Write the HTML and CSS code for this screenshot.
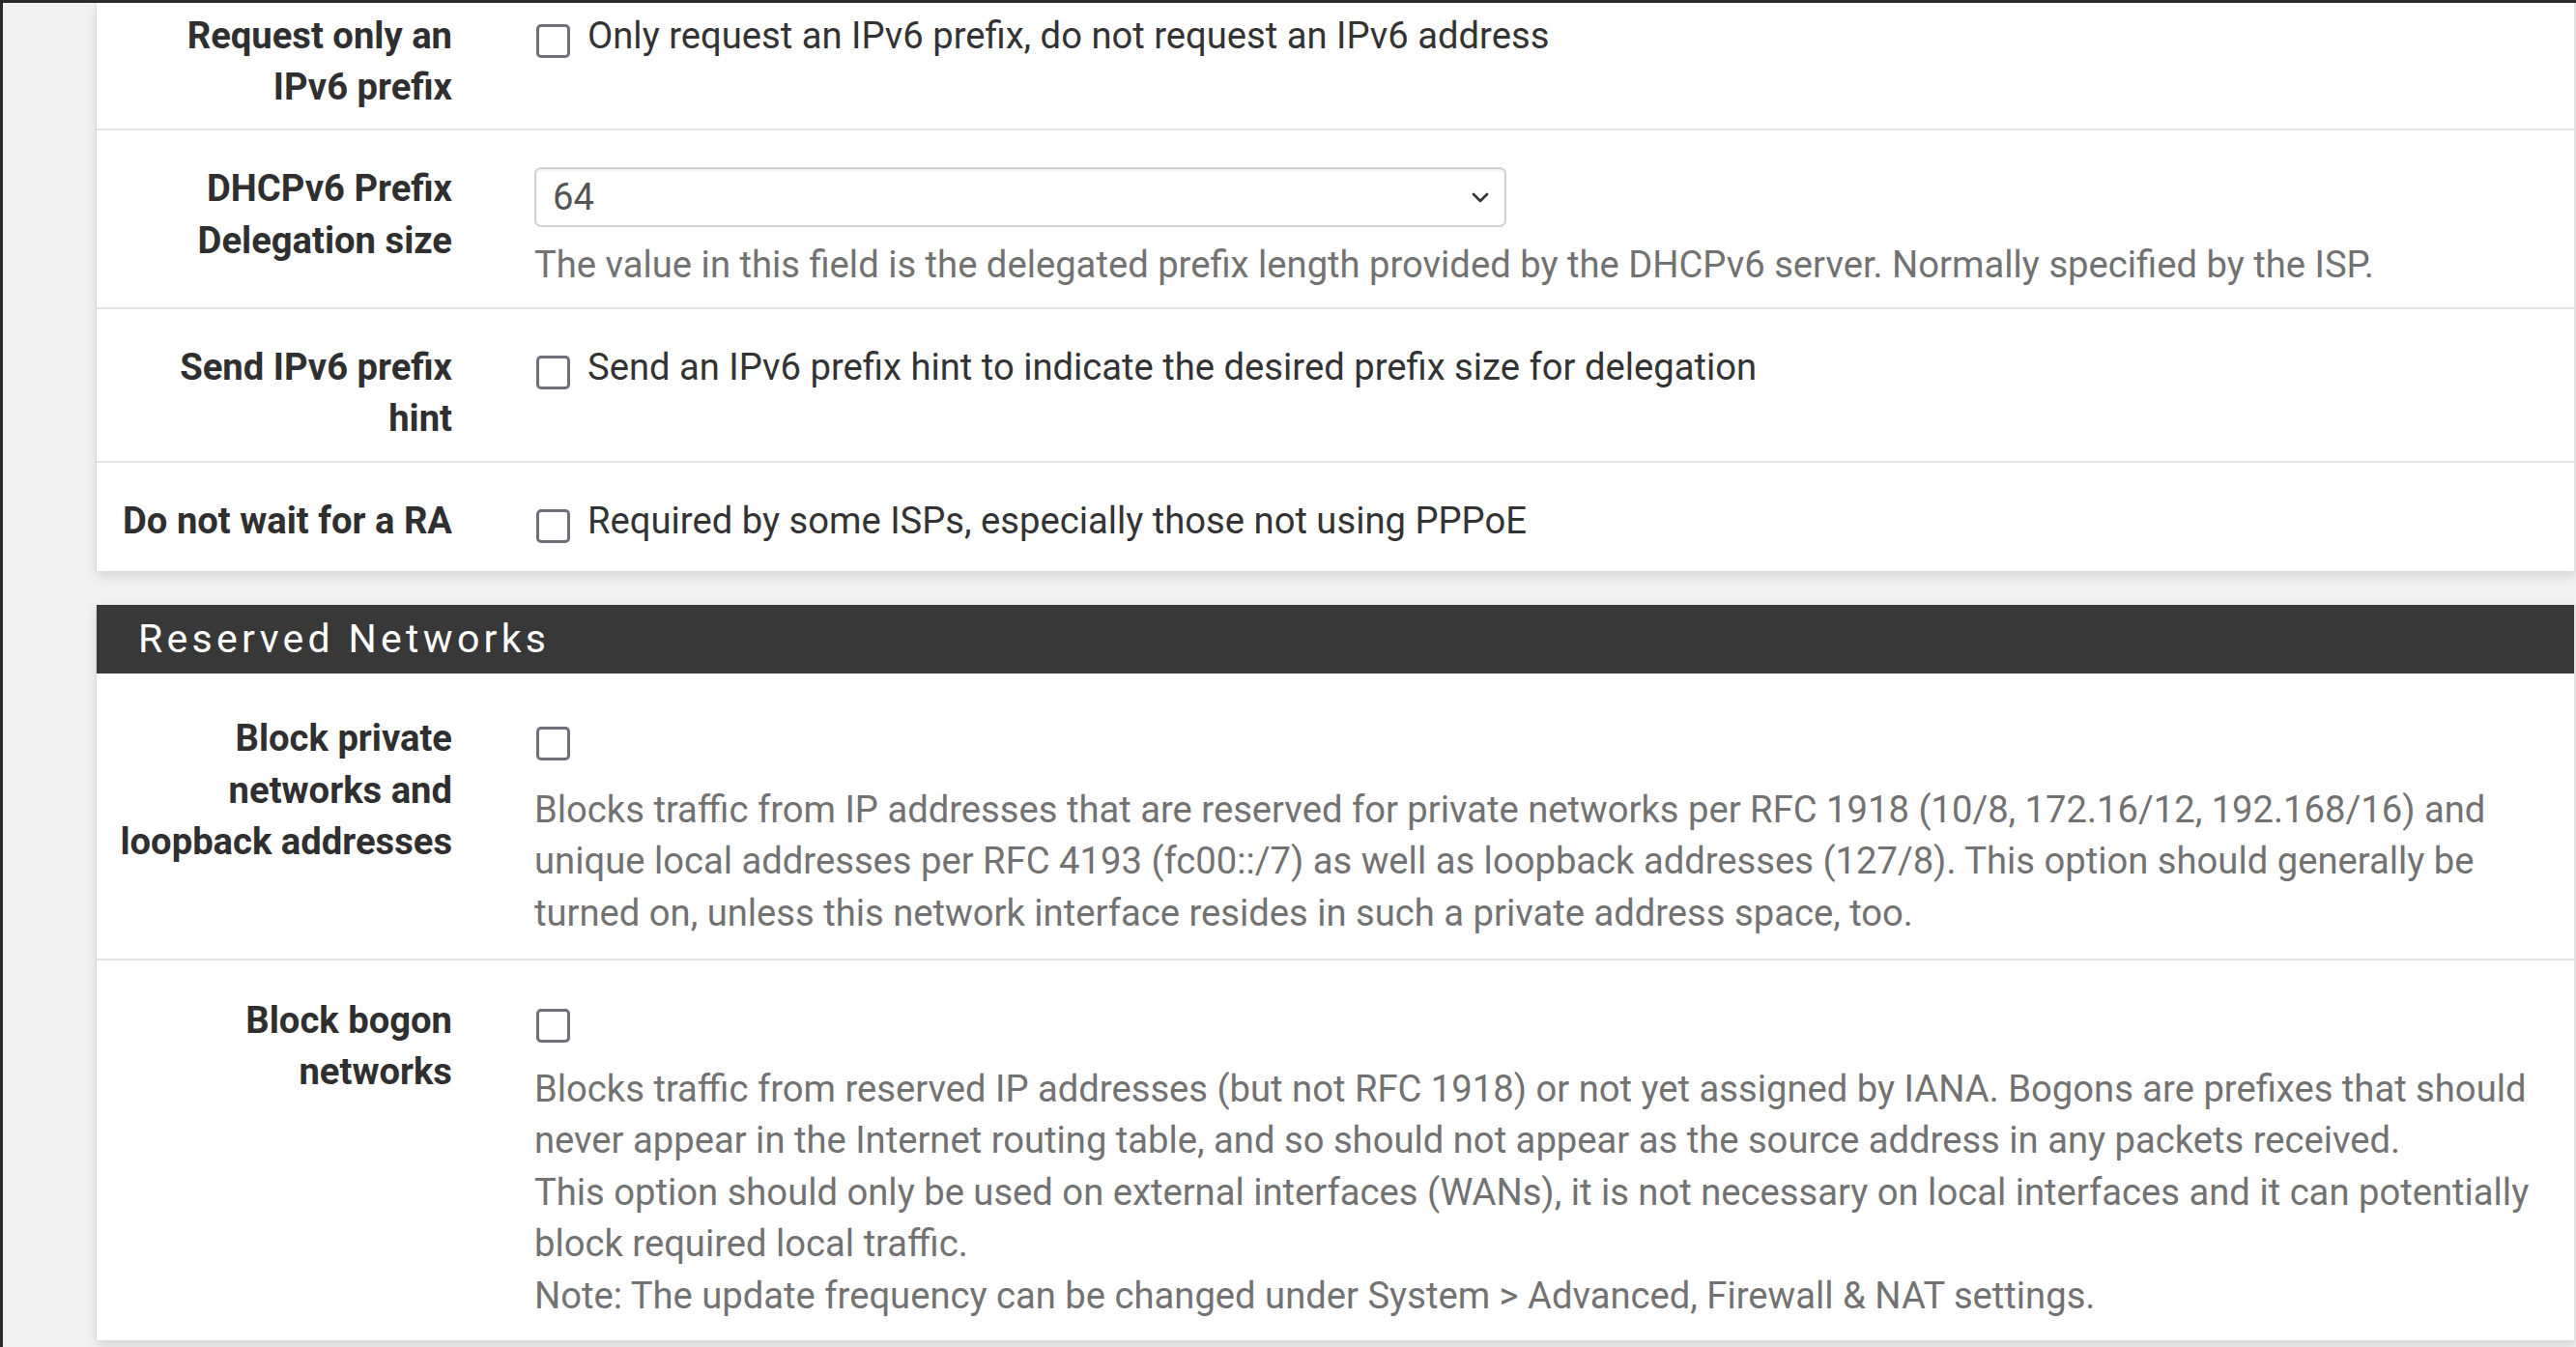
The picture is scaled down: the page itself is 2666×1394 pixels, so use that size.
FILE: index.html
```html
<!DOCTYPE html>
<html lang="en">
<head>
<meta charset="utf-8">
<title>Interfaces</title>
<link rel="stylesheet" href="styles.css">
</head>
<body>
<div class="page">
  <div class="panel panel-first">
    <div class="row row-cut">
      <div class="lbl">Request only an IPv6 prefix</div>
      <div class="ctl">
        <label class="chk"><input type="checkbox" class="box"><span>Only request an IPv6 prefix, do not request an IPv6 address</span></label>
      </div>
    </div>
    <div class="row">
      <div class="lbl">DHCPv6 Prefix Delegation size</div>
      <div class="ctl">
        <div class="select-wrap">
          <select class="sel"><option>64</option></select>
          <svg class="chev" width="18" height="11" viewBox="0 0 18 11"><path d="M2 2 L9 9 L16 2" fill="none" stroke="#333" stroke-width="2.6" stroke-linecap="round" stroke-linejoin="round"/></svg>
        </div>
        <div class="help help-sel">The value in this field is the delegated prefix length provided by the DHCPv6 server. Normally specified by the ISP.</div>
      </div>
    </div>
    <div class="row">
      <div class="lbl">Send IPv6 prefix hint</div>
      <div class="ctl">
        <label class="chk"><input type="checkbox" class="box"><span>Send an IPv6 prefix hint to indicate the desired prefix size for delegation</span></label>
      </div>
    </div>
    <div class="row row-last">
      <div class="lbl">Do not wait for a RA</div>
      <div class="ctl">
        <label class="chk"><input type="checkbox" class="box"><span>Required by some ISPs, especially those not using PPPoE</span></label>
      </div>
    </div>
  </div>

  <div class="panel panel-second">
    <div class="panel-heading">Reserved Networks</div>
    <div class="row row-firstbody">
      <div class="lbl">Block private networks and loopback addresses</div>
      <div class="ctl">
        <label class="chk"><input type="checkbox" class="box"></label>
        <div class="help help-chk">Blocks traffic from IP addresses that are reserved for private networks per RFC 1918 (10/8, 172.16/12, 192.168/16) and unique local addresses per RFC 4193 (fc00::/7) as well as loopback addresses (127/8). This option should generally be turned on, unless this network interface resides in such a private address space, too.</div>
      </div>
    </div>
    <div class="row row-bogon">
      <div class="lbl">Block bogon networks</div>
      <div class="ctl">
        <label class="chk"><input type="checkbox" class="box"></label>
        <div class="help help-chk2">Blocks traffic from reserved IP addresses (but not RFC 1918) or not yet assigned by IANA. Bogons are prefixes that should never appear in the Internet routing table, and so should not appear as the source address in any packets received.<br>This option should only be used on external interfaces (WANs), it is not necessary on local interfaces and it can potentially block required local traffic.<br>Note: The update frequency can be changed under System &gt; Advanced, Firewall &amp; NAT settings.</div>
      </div>
    </div>
  </div>
</div>
</body>
</html>
```

FILE: styles.css
```css
html, body {
  margin: 0;
  padding: 0;
}

body {
  width: 2666px;
  height: 1394px;
  box-sizing: border-box;
  overflow: hidden;
  background: #f2f2f2;
  border-top: 3px solid #2b2b2b;
  border-left: 3px solid #2b2b2b;
  font-family: Roboto, "Liberation Sans", Arial, sans-serif;
  font-size: 38.2px;
  line-height: 53.5px;
  color: #333;
}

.page {
  padding-left: 97px;
}

.panel {
  background: #fff;
  border-right: 2px solid #e2e2e2;
  box-shadow: 0 5px 12px rgba(0, 0, 0, 0.13), -1px 0 0 #e4e4e4;
}

.panel-first {
  margin-bottom: 34.5px;
}

.panel-heading {
  height: 71px;
  line-height: 71px;
  background: #383838;
  color: #fff;
  font-size: 41px;
  letter-spacing: 4.3px;
  padding-left: 43px;
  font-weight: 400;
}

.row {
  display: grid;
  grid-template-columns: 348px 2090px;
  column-gap: 85px;
  padding: 34px 0 16px 20px;
  border-top: 2px solid #e3e3e3;
}

.row-cut {
  border-top: 0;
  padding-top: 7.5px;
  padding-bottom: 15.5px;
}

.row-last {
  padding-bottom: 25px;
}

.row-firstbody {
  border-top: 0;
  padding-top: 41.5px;
  padding-bottom: 19.5px;
}

.row-bogon {
  padding-top: 36px;
  padding-bottom: 19px;
}

.lbl {
  text-align: right;
  font-weight: 700;
  color: #2f2f2f;
}

.ctl {
  min-width: 0;
}

.chk {
  display: flex;
  align-items: flex-start;
  color: #333;
}

.box {
  appearance: none;
  -webkit-appearance: none;
  flex-shrink: 0;
  width: 35px;
  height: 35px;
  box-sizing: border-box;
  margin: 14px 18px 0 2px;
  border: 3px solid #6f6f79;
  border-radius: 5px;
  background: #fff;
}

.select-wrap {
  position: relative;
  width: 1006px;
  margin-top: 4px;
}

.sel {
  appearance: none;
  -webkit-appearance: none;
  display: block;
  width: 1006px;
  height: 62px;
  box-sizing: border-box;
  padding: 0 60px 0 17px;
  border: 2px solid #d2d2d2;
  border-radius: 7px;
  background: #fff;
  box-shadow: inset 0 2px 2px rgba(0, 0, 0, 0.06);
  font-family: Roboto, "Liberation Sans", Arial, sans-serif;
  font-size: 38.2px;
  color: #555;
}

.chev {
  position: absolute;
  right: 18px;
  top: 26px;
}

.help {
  color: #727272;
}

.help-sel {
  margin-top: 13px;
}

.help-chk {
  margin-top: 24.5px;
}

.help-chk2 {
  margin-top: 22px;
}
```
